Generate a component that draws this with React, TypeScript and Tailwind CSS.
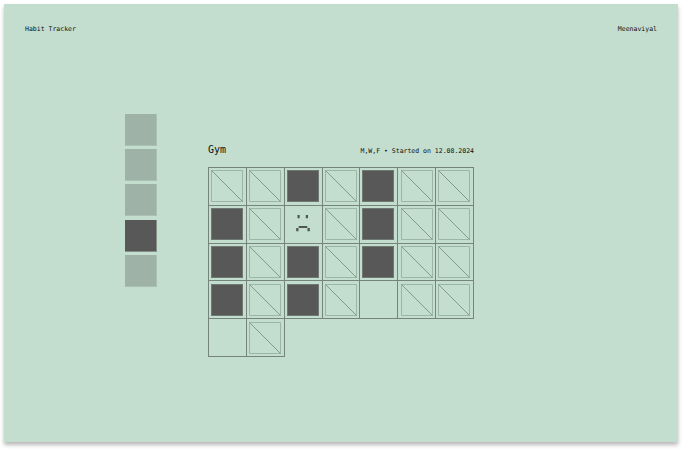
type Kind = "off" | "done" | "sad" | "open";

const days: Kind[] = [
  "off", "off", "done", "off", "done", "off", "off",
  "done", "off", "sad", "off", "done", "off", "off",
  "done", "off", "done", "off", "done", "off", "off",
  "done", "off", "done", "off", "open", "off", "off",
  "open", "off",
];

const swatches = [false, false, false, true, false];

function Mark({ kind }: { kind: Kind }) {
  if (kind === "open") return null;
  if (kind === "done") {
    return <div className="size-8 shrink-0 border border-[#6f7972] bg-[#585858]" />;
  }
  if (kind === "sad") {
    return (
      <svg className="block size-8 shrink-0" viewBox="0 0 32 32" fill="#505651">
        <path d="M10.5 7h2.2v3.2h-2.2zM18.8 7H21v3.2h-2.2zM11.7 17.9h8.6V20h-8.6zM9.2 20h2.3v3.3H9.2zM20.5 20h2.3v3.3h-2.3z" />
      </svg>
    );
  }
  return (
    <svg className="block size-8 shrink-0" viewBox="0 0 32 32" fill="none" stroke="#9db5a8">
      <path d="M.5 .5h31v31H.5z" />
      <path d="M.5 .5l31 31" stroke="#6f8277" strokeWidth=".75" />
    </svg>
  );
}

export default function App() {
  return (
    <main className="h-[452px] w-[685px] bg-white pl-1 pt-1 font-['DejaVu_Sans_Mono',monospace] text-[#0c100d]">
      <div className="h-[438px] w-[674px] bg-[#c3decf] shadow-[0_3px_4px_rgba(0,0,0,0.28)]">
        <header className="flex h-[30px] justify-between px-[21px] pt-5 text-[6.5px] leading-[11px]">
          <span>Habit Tracker</span>
          <span>Meenaviyal</span>
        </header>
        <div className="flex pl-[121px] pt-20">
          <aside className="flex w-8 flex-col gap-[3.2px]">
            {swatches.map((active, i) => (
              <div
                key={i}
                className={
                  active
                    ? "size-8 border-b border-r border-[#839087] bg-[#585858]"
                    : "size-8 border-b border-r border-[#a9c0b3] bg-[#9fb2a7]"
                }
              />
            ))}
          </aside>
          <section className="ml-[51px] w-[266px] pt-[28px]">
            <div className="flex h-[25px] items-start justify-between">
              <h1 className="text-[10px] leading-[15px]">Gym</h1>
              <p className="pt-1 text-[6.5px] leading-[11px] whitespace-nowrap">M,W,F • Started on 12.08.2024</p>
            </div>
            <div className="grid grid-cols-[38px_38px_38px_37px_38px_38px_39px] grid-rows-[38px_38px_37px_38px_39px]">
              {days.map((kind, i) => {
                const right = i % 7 === 6 || i === 29;
                const bottom = i > 27;
                const left = i % 7 === 5 ? "pl-[3px]" : "pl-[2px]";
                const top = i > 20 ? "pt-[3px]" : "pt-[2px]";
                return (
                  <div
                    key={i}
                    className={`flex border-l border-t border-[#75857b] ${left} ${top} ${right ? "border-r" : ""} ${bottom ? "border-b" : ""} ${i === 29 ? "w-[39px]" : ""}`}
                  >
                    <Mark kind={kind} />
                  </div>
                );
              })}
              <div className="col-span-5 ml-px border-t border-[#75857b]" />
            </div>
          </section>
        </div>
      </div>
    </main>
  );
}
